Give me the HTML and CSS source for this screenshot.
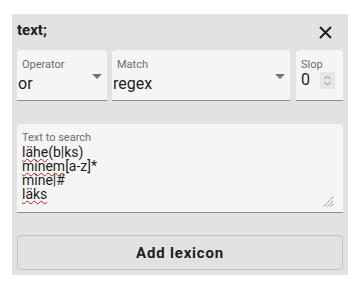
FILE: index.html
```html
<!DOCTYPE html>
<html>
<head>
<meta charset="utf-8">
<link rel="stylesheet" href="styles.css">
</head>
<body>
<div class="panel">
  <div class="header">
    <div class="title">text;</div>
    <svg class="close" width="13" height="13" viewBox="0 0 13 13"><path d="M1 1L12 12M12 1L1 12" stroke="#1e1e1e" stroke-width="2" fill="none"/></svg>
  </div>
  <div class="fields">
    <div class="field operator">
      <div class="label">Operator</div>
      <div class="value select">or</div>
      <svg class="arrow" width="10" height="5" viewBox="0 0 10 5"><path d="M0 0L5 5L10 0Z" fill="#757575"/></svg>
    </div>
    <div class="field match">
      <div class="label">Match</div>
      <div class="value select">regex</div>
      <svg class="arrow" width="10" height="5" viewBox="0 0 10 5"><path d="M0 0L5 5L10 0Z" fill="#757575"/></svg>
    </div>
    <div class="field slop">
      <div class="label">Slop</div>
      <div class="slop-row">
        <span class="value num">0</span>
        <span class="spinner"><svg width="15" height="17" viewBox="0 0 15 17"><path d="M4.5 7L7.5 4L10.5 7M4.5 10L7.5 13L10.5 10" stroke="#8a8a8a" stroke-width="1" fill="none"/></svg></span>
      </div>
    </div>
  </div>
  <div class="textarea">
    <div class="label">Text to search</div>
    <div class="lines">
      <div><span class="sp">lähe</span>(b|ks)</div>
      <div><span class="sp">minem</span>[a-z]*</div>
      <div>mine|#</div>
      <div><span class="sp">läks</span></div>
    </div>
    <svg class="grip" width="12" height="12" viewBox="0 0 12 12"><path d="M11 1L1 11M11 5L5 11M11 8L8 11" stroke="#8a8a8a" stroke-width="1.2" stroke-dasharray="1 1" fill="none"/></svg>
  </div>
  <div class="button">Add lexicon</div>
</div>
</body>
</html>
```

FILE: styles.css
```css
html, body {
  margin: 0;
  padding: 0;
  background: #ffffff;
}
body {
  font-family: Roboto, "Liberation Sans", sans-serif;
  color: #1e1e1e;
}
.panel {
  margin: 14px 0 0 12px;
  width: 336px;
  height: 261px;
  box-sizing: border-box;
  background: #e2e2e2;
  padding: 0 5px 5px 5px;
  display: flex;
  flex-direction: column;
}
.header {
  height: 36px;
  display: flex;
  justify-content: space-between;
  align-items: flex-start;
}
.title {
  font-size: 15px;
  font-weight: 700;
  line-height: 18px;
  padding-top: 7px;
  color: #1e1e1e;
}
.close {
  margin-top: 12px;
  margin-right: 11px;
}
.fields {
  display: flex;
  height: 51px;
}
.field {
  position: relative;
  box-sizing: border-box;
  height: 51px;
  background: #f5f5f5;
  border-radius: 4px 4px 0 0;
  border-bottom: 1px solid #8c8c8c;
  padding-top: 8px;
}
.operator { width: 90px; }
.match { width: 178px; margin-left: 5px; }
.slop { width: 47px; margin-left: 6px; }
.label {
  font-size: 11px;
  line-height: 13px;
  color: #6e6e6e;
  padding-left: 5px;
}
.value {
  font-size: 16px;
  line-height: 19px;
  color: #1e1e1e;
}
.select {
  margin-top: 3px;
  padding-left: 1px;
}
.arrow {
  position: absolute;
  right: 5px;
  top: 24px;
}
.slop-row {
  display: flex;
  align-items: flex-start;
  padding-left: 5px;
  margin-top: -1px;
}
.num {
  width: 19px;
}
.spinner {
  margin-top: 2px;
  width: 15px;
  height: 17px;
  background: #e6e6ea;
  display: block;
}
.spinner svg { display: block; }
.textarea {
  position: relative;
  margin-top: 23px;
  box-sizing: border-box;
  height: 89px;
  background: #f5f5f5;
  border-radius: 4px 4px 0 0;
  border-bottom: 1px solid #8c8c8c;
  padding-top: 7px;
}
.lines {
  margin-top: 1px;
  padding-left: 5px;
  font-size: 14px;
  line-height: 14px;
  color: #1e1e1e;
}
.sp {
  text-decoration: underline wavy #e01818;
  text-decoration-thickness: 1.3px;
  text-underline-offset: 1px;
  text-decoration-skip-ink: none;
}
.grip {
  position: absolute;
  right: 9px;
  bottom: 4px;
}
.button {
  margin-top: 22px;
  box-sizing: border-box;
  height: 35px;
  border: 1px solid #c2c2c2;
  border-radius: 4px;
  display: flex;
  align-items: center;
  justify-content: center;
  font-size: 15px;
  font-weight: 700;
  letter-spacing: 0.8px;
  color: #1e1e1e;
}
```
